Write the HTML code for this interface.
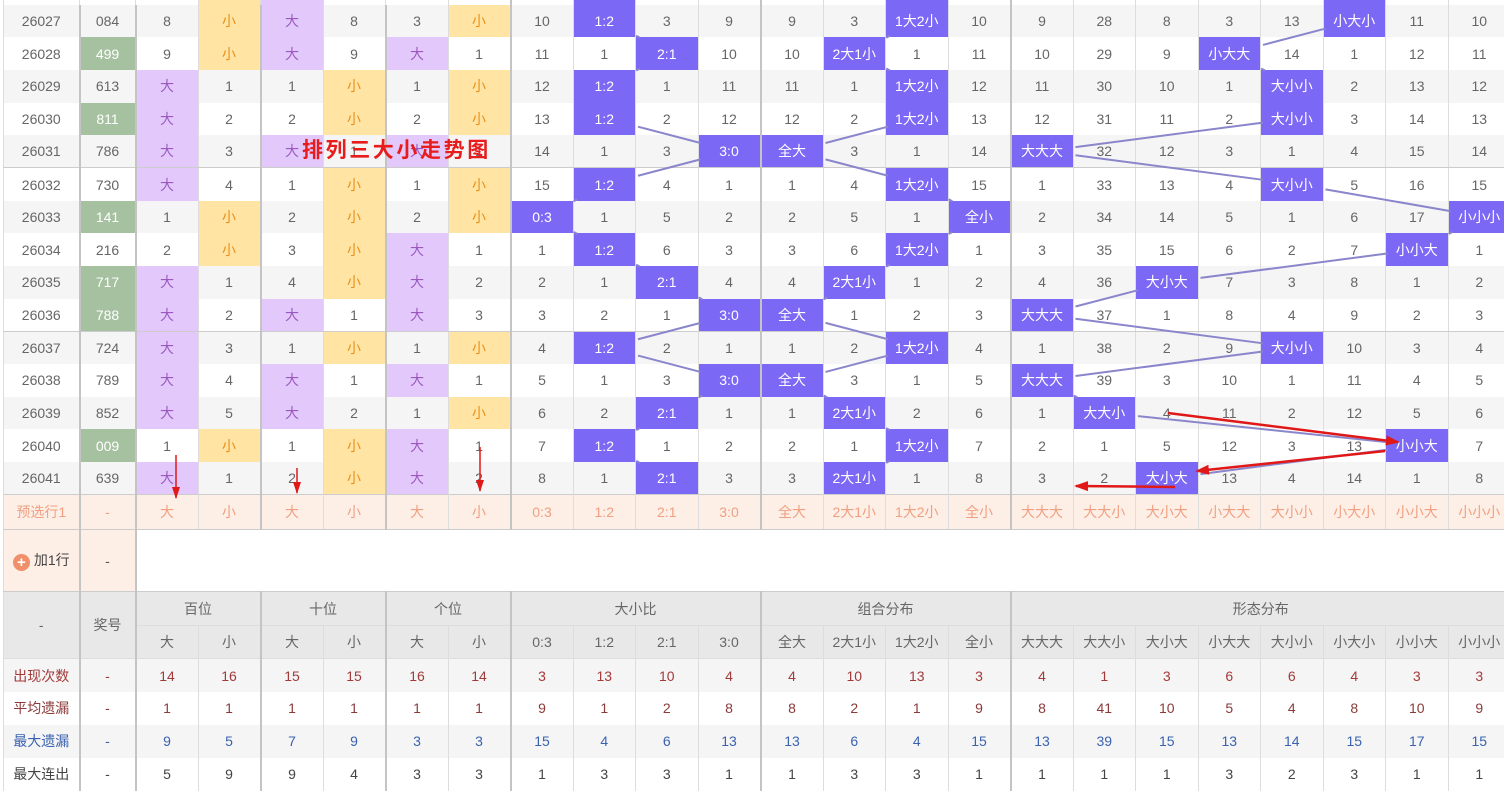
<!DOCTYPE html>
<html><head><meta charset="utf-8">
<style>
html,body{margin:0;padding:0;background:#fff;width:1504px;height:792px;overflow:hidden;position:relative}
table{position:absolute;left:3px;top:-28.2px;width:1507px;border-collapse:collapse;table-layout:fixed;font-family:"Liberation Sans","Noto Sans CJK SC",sans-serif;font-size:14px;color:#666}
td{padding:0;text-align:center;border-left:1px solid #ddd;border-right:1px solid #ddd;white-space:nowrap;overflow:hidden}
tr.d{height:32.7px}
tr.d:nth-child(odd) td{background:#fff}
tr.d:nth-child(even) td{background:#f5f5f5}
tr.d td.p{background:#e3c8fb;color:#9b59c0}
tr.d td.y{background:#ffe4a3;color:#e8901a}
tr.d td.b{background:#7b68f5;color:#fff}
tr.d td.g{background:#a6c1a0;color:#fff}
td.L{border-left:2px solid #c4c4c4}
tr.s5 td{border-bottom:1px solid #ccc}
tr.pre td{background:#fdeee6;color:#f0a080;height:34px;border-bottom:1px solid #ccc;border-top:1px solid #ccc}
tr.add td{height:61px;border-bottom:1px solid #ccc}
tr.add td.pk{background:#fdeee6;color:#555}
tr.h td{background:#e8e8e8;color:#666;height:32.5px;border-bottom:1px solid #ddd}
tr.st{height:33px}
tr.st:nth-child(odd) td{background:#f5f5f5}
tr.st td{background:#fff}
.c1 td{color:#a33a3a}.c2 td{color:#8b3a3a}.c3 td{color:#3a62b0}.c4 td{color:#444}
.plus{display:inline-block;width:17px;height:17px;border-radius:50%;background:#f0906a;color:#fff;font-size:15px;line-height:17px;vertical-align:-2px;margin-right:4px;font-weight:bold}
.title{position:absolute;left:302px;top:134px;font:bold 21px "Noto Sans CJK SC",sans-serif;letter-spacing:2.6px;color:#e81c1c;z-index:5}
svg{position:absolute;left:0;top:0;z-index:3}
</style></head><body>
<table>
<colgroup><col style="width:76px"><col style="width:56px"><col span="22" style="width:62.5px"></colgroup>
<tr class="d"><td>26026</td><td></td><td></td><td class="y"></td><td class="p"></td><td></td><td></td><td></td><td class="L"></td><td class="b"></td><td></td><td></td><td class="L"></td><td></td><td class="b"></td><td></td><td class="L"></td><td></td><td></td><td></td><td></td><td class="b"></td><td></td><td></td></tr>
<tr class="d"><td>26027</td><td class="L">084</td><td class="L">8</td><td class="y">小</td><td class="p L">大</td><td>8</td><td class="L">3</td><td class="y">小</td><td class="L">10</td><td class="b">1:2</td><td>3</td><td>9</td><td class="L">9</td><td>3</td><td class="b">1大2小</td><td>10</td><td class="L">9</td><td>28</td><td>8</td><td>3</td><td>13</td><td class="b">小大小</td><td>11</td><td>10</td></tr>
<tr class="d"><td>26028</td><td class="g L">499</td><td class="L">9</td><td class="y">小</td><td class="p L">大</td><td>9</td><td class="p L">大</td><td>1</td><td class="L">11</td><td>1</td><td class="b">2:1</td><td>10</td><td class="L">10</td><td class="b">2大1小</td><td>1</td><td>11</td><td class="L">10</td><td>29</td><td>9</td><td class="b">小大大</td><td>14</td><td>1</td><td>12</td><td>11</td></tr>
<tr class="d"><td>26029</td><td class="L">613</td><td class="p L">大</td><td>1</td><td class="L">1</td><td class="y">小</td><td class="L">1</td><td class="y">小</td><td class="L">12</td><td class="b">1:2</td><td>1</td><td>11</td><td class="L">11</td><td>1</td><td class="b">1大2小</td><td>12</td><td class="L">11</td><td>30</td><td>10</td><td>1</td><td class="b">大小小</td><td>2</td><td>13</td><td>12</td></tr>
<tr class="d"><td>26030</td><td class="g L">811</td><td class="p L">大</td><td>2</td><td class="L">2</td><td class="y">小</td><td class="L">2</td><td class="y">小</td><td class="L">13</td><td class="b">1:2</td><td>2</td><td>12</td><td class="L">12</td><td>2</td><td class="b">1大2小</td><td>13</td><td class="L">12</td><td>31</td><td>11</td><td>2</td><td class="b">大小小</td><td>3</td><td>14</td><td>13</td></tr>
<tr class="d s5"><td>26031</td><td class="L">786</td><td class="p L">大</td><td>3</td><td class="p L">大</td><td>1</td><td class="p L">大</td><td>1</td><td class="L">14</td><td>1</td><td>3</td><td class="b">3:0</td><td class="b L">全大</td><td>3</td><td>1</td><td>14</td><td class="b L">大大大</td><td>32</td><td>12</td><td>3</td><td>1</td><td>4</td><td>15</td><td>14</td></tr>
<tr class="d"><td>26032</td><td class="L">730</td><td class="p L">大</td><td>4</td><td class="L">1</td><td class="y">小</td><td class="L">1</td><td class="y">小</td><td class="L">15</td><td class="b">1:2</td><td>4</td><td>1</td><td class="L">1</td><td>4</td><td class="b">1大2小</td><td>15</td><td class="L">1</td><td>33</td><td>13</td><td>4</td><td class="b">大小小</td><td>5</td><td>16</td><td>15</td></tr>
<tr class="d"><td>26033</td><td class="g L">141</td><td class="L">1</td><td class="y">小</td><td class="L">2</td><td class="y">小</td><td class="L">2</td><td class="y">小</td><td class="b L">0:3</td><td>1</td><td>5</td><td>2</td><td class="L">2</td><td>5</td><td>1</td><td class="b">全小</td><td class="L">2</td><td>34</td><td>14</td><td>5</td><td>1</td><td>6</td><td>17</td><td class="b">小小小</td></tr>
<tr class="d"><td>26034</td><td class="L">216</td><td class="L">2</td><td class="y">小</td><td class="L">3</td><td class="y">小</td><td class="p L">大</td><td>1</td><td class="L">1</td><td class="b">1:2</td><td>6</td><td>3</td><td class="L">3</td><td>6</td><td class="b">1大2小</td><td>1</td><td class="L">3</td><td>35</td><td>15</td><td>6</td><td>2</td><td>7</td><td class="b">小小大</td><td>1</td></tr>
<tr class="d"><td>26035</td><td class="g L">717</td><td class="p L">大</td><td>1</td><td class="L">4</td><td class="y">小</td><td class="p L">大</td><td>2</td><td class="L">2</td><td>1</td><td class="b">2:1</td><td>4</td><td class="L">4</td><td class="b">2大1小</td><td>1</td><td>2</td><td class="L">4</td><td>36</td><td class="b">大小大</td><td>7</td><td>3</td><td>8</td><td>1</td><td>2</td></tr>
<tr class="d s5"><td>26036</td><td class="g L">788</td><td class="p L">大</td><td>2</td><td class="p L">大</td><td>1</td><td class="p L">大</td><td>3</td><td class="L">3</td><td>2</td><td>1</td><td class="b">3:0</td><td class="b L">全大</td><td>1</td><td>2</td><td>3</td><td class="b L">大大大</td><td>37</td><td>1</td><td>8</td><td>4</td><td>9</td><td>2</td><td>3</td></tr>
<tr class="d"><td>26037</td><td class="L">724</td><td class="p L">大</td><td>3</td><td class="L">1</td><td class="y">小</td><td class="L">1</td><td class="y">小</td><td class="L">4</td><td class="b">1:2</td><td>2</td><td>1</td><td class="L">1</td><td>2</td><td class="b">1大2小</td><td>4</td><td class="L">1</td><td>38</td><td>2</td><td>9</td><td class="b">大小小</td><td>10</td><td>3</td><td>4</td></tr>
<tr class="d"><td>26038</td><td class="L">789</td><td class="p L">大</td><td>4</td><td class="p L">大</td><td>1</td><td class="p L">大</td><td>1</td><td class="L">5</td><td>1</td><td>3</td><td class="b">3:0</td><td class="b L">全大</td><td>3</td><td>1</td><td>5</td><td class="b L">大大大</td><td>39</td><td>3</td><td>10</td><td>1</td><td>11</td><td>4</td><td>5</td></tr>
<tr class="d"><td>26039</td><td class="L">852</td><td class="p L">大</td><td>5</td><td class="p L">大</td><td>2</td><td class="L">1</td><td class="y">小</td><td class="L">6</td><td>2</td><td class="b">2:1</td><td>1</td><td class="L">1</td><td class="b">2大1小</td><td>2</td><td>6</td><td class="L">1</td><td class="b">大大小</td><td>4</td><td>11</td><td>2</td><td>12</td><td>5</td><td>6</td></tr>
<tr class="d"><td>26040</td><td class="g L">009</td><td class="L">1</td><td class="y">小</td><td class="L">1</td><td class="y">小</td><td class="p L">大</td><td>1</td><td class="L">7</td><td class="b">1:2</td><td>1</td><td>2</td><td class="L">2</td><td>1</td><td class="b">1大2小</td><td>7</td><td class="L">2</td><td>1</td><td>5</td><td>12</td><td>3</td><td>13</td><td class="b">小小大</td><td>7</td></tr>
<tr class="d"><td>26041</td><td class="L">639</td><td class="p L">大</td><td>1</td><td class="L">2</td><td class="y">小</td><td class="p L">大</td><td>2</td><td class="L">8</td><td>1</td><td class="b">2:1</td><td>3</td><td class="L">3</td><td class="b">2大1小</td><td>1</td><td>8</td><td class="L">3</td><td>2</td><td class="b">大小大</td><td>13</td><td>4</td><td>14</td><td>1</td><td>8</td></tr>
<tr class="pre"><td>预选行1</td><td class="L">-</td><td class="L">大</td><td>小</td><td class="L">大</td><td>小</td><td class="L">大</td><td>小</td><td class="L">0:3</td><td>1:2</td><td>2:1</td><td>3:0</td><td class="L">全大</td><td>2大1小</td><td>1大2小</td><td>全小</td><td class="L">大大大</td><td>大大小</td><td>大小大</td><td>小大大</td><td>大小小</td><td>小大小</td><td>小小大</td><td>小小小</td></tr>
<tr class="add"><td class="pk" style="color:#444"><span class="plus">+</span>加1行</td><td class="pk L">-</td><td colspan="22" class="L" style="border-right:1px solid #ccc"></td></tr>
<tr class="h"><td rowspan="2">-</td><td rowspan="2" class="L">奖号</td><td colspan="2" class="L">百位</td><td colspan="2" class="L">十位</td><td colspan="2" class="L">个位</td><td colspan="4" class="L">大小比</td><td colspan="4" class="L">组合分布</td><td colspan="8" class="L">形态分布</td></tr>
<tr class="h"><td class="L">大</td><td>小</td><td class="L">大</td><td>小</td><td class="L">大</td><td>小</td><td class="L">0:3</td><td>1:2</td><td>2:1</td><td>3:0</td><td class="L">全大</td><td>2大1小</td><td>1大2小</td><td>全小</td><td class="L">大大大</td><td>大大小</td><td>大小大</td><td>小大大</td><td>大小小</td><td>小大小</td><td>小小大</td><td>小小小</td></tr>
<tr class="st c1"><td>出现次数</td><td class="L">-</td><td class="L">14</td><td>16</td><td class="L">15</td><td>15</td><td class="L">16</td><td>14</td><td class="L">3</td><td>13</td><td>10</td><td>4</td><td class="L">4</td><td>10</td><td>13</td><td>3</td><td class="L">4</td><td>1</td><td>3</td><td>6</td><td>6</td><td>4</td><td>3</td><td>3</td></tr>
<tr class="st c2"><td>平均遗漏</td><td class="L">-</td><td class="L">1</td><td>1</td><td class="L">1</td><td>1</td><td class="L">1</td><td>1</td><td class="L">9</td><td>1</td><td>2</td><td>8</td><td class="L">8</td><td>2</td><td>1</td><td>9</td><td class="L">8</td><td>41</td><td>10</td><td>5</td><td>4</td><td>8</td><td>10</td><td>9</td></tr>
<tr class="st c3"><td>最大遗漏</td><td class="L">-</td><td class="L">9</td><td>5</td><td class="L">7</td><td>9</td><td class="L">3</td><td>3</td><td class="L">15</td><td>4</td><td>6</td><td>13</td><td class="L">13</td><td>6</td><td>4</td><td>15</td><td class="L">13</td><td>39</td><td>15</td><td>13</td><td>14</td><td>15</td><td>17</td><td>15</td></tr>
<tr class="st c4"><td>最大连出</td><td class="L">-</td><td class="L">5</td><td>9</td><td class="L">9</td><td>4</td><td class="L">3</td><td>3</td><td class="L">1</td><td>3</td><td>3</td><td>1</td><td class="L">1</td><td>3</td><td>3</td><td>1</td><td class="L">1</td><td>1</td><td>1</td><td>3</td><td>2</td><td>3</td><td>1</td><td>1</td></tr>
</table>
<div class="title">排列三大小走势图</div>
<svg id="sv" width="1504" height="792">
<defs><marker id="ah" markerUnits="userSpaceOnUse" markerWidth="14" markerHeight="10" refX="12" refY="5" orient="auto"><path d="M0,0 L14,5 L0,10 Z" fill="#e01818"/></marker>
<marker id="ah2" markerUnits="userSpaceOnUse" markerWidth="8" markerHeight="12" refX="4" refY="11" orient="0"><path d="M0,0 L8,0 L4,12 Z" fill="#e01818"/></marker></defs>
<g id="ln" stroke="#8a86cc" stroke-width="2" fill="none"></g>
<g stroke="#e01818" stroke-width="1.5" fill="none" marker-end="url(#ah2)">
<line x1="176" y1="455" x2="176" y2="498"/>
<line x1="297" y1="468" x2="297" y2="493"/>
<line x1="480" y1="447" x2="480" y2="491"/>
</g>
<g stroke="#e01818" stroke-width="2.5" fill="none" marker-end="url(#ah)">
<line x1="1168" y1="413" x2="1398" y2="442"/>
<line x1="1385" y1="451" x2="1197" y2="471"/>
<line x1="1175" y1="487" x2="1076" y2="486"/>
</g>
</svg>
<script>
var seqs=[[7,8,7,7,9,7,6,7,8,9,7,9,8,7,8],[12,11,12,12,10,12,13,12,11,10,12,10,11,12,11],[19,17,18,18,14,18,21,20,16,14,18,14,15,20,16]];
var g=document.getElementById('ln'),h='';
seqs.forEach(function(s){for(var r=0;r<s.length-1;r++){var a=s[r],b=s[r+1];if(a==b)continue;
var x1=169.25+62.5*a,x2=169.25+62.5*b,y1=20.4+32.7*r,y2=y1+32.7;var dx=x2-x1,dy=32.7;
var t=Math.min(31.25/Math.abs(dx),16.35/dy);if(t>=0.5){t=0.47;}
h+='<line x1="'+(x1+dx*t)+'" y1="'+(y1+dy*t)+'" x2="'+(x2-dx*t)+'" y2="'+(y2-dy*t)+'"/>';}});
g.innerHTML=h;
</script>
</body></html>
